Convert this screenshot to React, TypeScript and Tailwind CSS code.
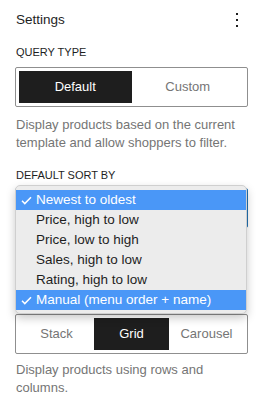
import { useState } from 'react'

const sortOptions = [
  'Newest to oldest',
  'Price, high to low',
  'Price, low to high',
  'Sales, high to low',
  'Rating, high to low',
  'Manual (menu order + name)',
]

function IconKebab() {
  return (
    <svg width="24" height="24" viewBox="0 0 24 24" fill="#1e1e1e">
      <rect x="11" y="5" width="2" height="2" />
      <rect x="11" y="11" width="2" height="2" />
      <rect x="11" y="17" width="2" height="2" />
    </svg>
  )
}

function IconCheck() {
  return (
    <svg width="11" height="9" viewBox="0 0 11 9" fill="none">
      <path d="M1 4.8 L3.8 7.6 L10 1.2" stroke="white" strokeWidth="1.5" />
    </svg>
  )
}

function Toggle({ options, active }: { options: string[]; active: string }) {
  return (
    <div className="flex h-[40px] rounded-[2px] border border-[#8f8f8f] p-[3px]">
      {options.map((opt) => (
        <button
          key={opt}
          type="button"
          className={`flex h-full flex-1 items-center justify-center text-[13px] ${
            opt === active ? 'bg-[#1e1e1e] text-white' : 'text-[#757575]'
          }`}
        >
          {opt}
        </button>
      ))}
    </div>
  )
}

export default function App() {
  const [checked] = useState<number[]>([0, 5])

  return (
    <div className="h-[409px] w-[263px] overflow-hidden bg-white px-[15px] font-['Liberation_Sans',Arial,sans-serif] text-[#1e1e1e]">
      {/* --- Header --- */}
      <div className="flex h-[40px] items-center justify-between">
        <p className="pl-[1px] text-[13.5px]">Settings</p>
        <div className="-mr-[1px]">
          <IconKebab />
        </div>
      </div>

      {/* --- Query type --- */}
      <p className="mt-[4px] pl-[1px] text-[11px] leading-[16px] uppercase">Query type</p>
      <div className="mt-[7px]">
        <Toggle options={['Default', 'Custom']} active="Default" />
      </div>
      <p className="mt-[9px] pl-[1px] text-[13px] leading-[18px] text-[#757575]">
        Display products based on the current template and allow shoppers to filter.
      </p>

      {/* --- Sort --- */}
      <p className="mt-[15px] pl-[1px] text-[11px] leading-[16px] uppercase">Default sort by</p>
      <div className="relative mt-[5px]">
        <div className="h-[40px] rounded-[2px] border-[1.5px] border-[#2271b1] bg-white" />

        {/* open menu */}
        <div className="absolute top-[-3px] left-0 z-10 w-[232px] rounded-[5px] border border-[#cfcfcf] bg-[#ececec] pt-[4px] pb-[3px] shadow-[0_4px_10px_rgba(0,0,0,0.22)]">
          {sortOptions.map((opt, idx) => {
            const on = checked.includes(idx)
            return (
              <div
                key={opt}
                className={`flex h-[20px] items-center text-[13.5px] ${
                  on ? 'bg-[#4a97f7] text-white' : 'text-[#1e1e1e]'
                }`}
              >
                <span className="flex w-[20px] pl-[5px]">{on && <IconCheck />}</span>
                <span>{opt}</span>
              </div>
            )
          })}
        </div>
      </div>

      {/* --- Layout --- */}
      <div className="mt-[86px]">
        <Toggle options={['Stack', 'Grid', 'Carousel']} active="Grid" />
      </div>
      <p className="mt-[7px] pl-[1px] text-[13px] leading-[18px] text-[#757575]">
        Display products using rows and columns.
      </p>
    </div>
  )
}
